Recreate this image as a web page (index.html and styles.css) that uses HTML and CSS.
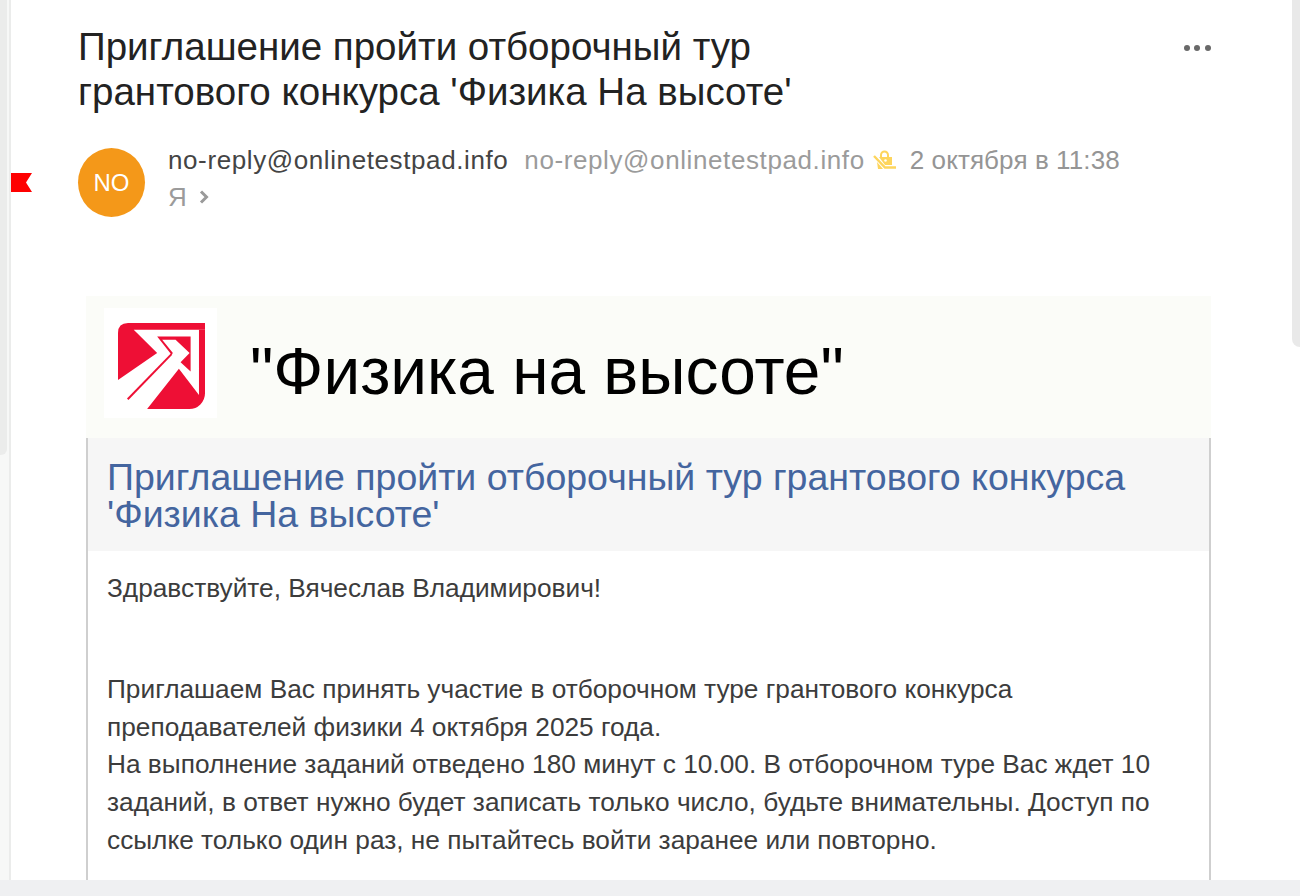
FILE: index.html
```html
<!DOCTYPE html>
<html lang="ru">
<head>
<meta charset="utf-8">
<title>Письмо</title>
<link rel="stylesheet" href="styles.css">
</head>
<body>
<div class="viewport">
  <div class="rail"><div class="rail-top"></div></div>
  <main class="mail">
    <header class="subject-row">
      <h1 class="subject">Приглашение пройти отборочный тур<br>грантового конкурса 'Физика На высоте'</h1>
      <div class="more"><i></i><i></i><i></i></div>
    </header>
    <section class="meta">
      <svg class="flag" viewBox="0 0 21 19" width="21" height="19"><path d="M0 0H21L15 9.500L21 19H0Z" fill="#fe0000"/></svg>
      <div class="avatar">NO</div>
      <div class="meta-text">
        <div class="from">
          <span class="from-name">no-reply@onlinetestpad.info</span>
          <span class="from-mail">no-reply@onlinetestpad.info</span>
          <svg class="lock" viewBox="872 154 23 20" width="23" height="20"><path d="M880 161V159a3.500 3.500 0 0 1 7 0V161" fill="none" stroke="#fdd55d" stroke-width="2"/><path d="M878 161H891V169H884Z" fill="#fdd55d"/><circle cx="884.500" cy="164.500" r="1.300" fill="#fff"/><path d="M873 160L884 171.500H895" fill="none" stroke="#fdd55d" stroke-width="2.400"/><path d="M876 166L882 173H877Z" fill="#fdd55d"/></svg>
          <span class="from-date">2 октября в 11:38</span>
        </div>
        <div class="to"><span>Я</span><svg viewBox="0 0 10 14" width="10" height="14"><path d="M2 1.500L7.500 7L2 12.500" fill="none" stroke="#9a9a9a" stroke-width="3"/></svg></div>
      </div>
    </section>
    <article class="letter">
      <div class="banner">
        <div class="logo-box">
          <svg viewBox="118 95 260 257" width="87" height="86">
            <path d="M118 125Q118 95 148 95H378V115H165L235 185L118 265Z" fill="#ee0f35"/>
            <path d="M360 115H378V305A47 47 0 0 1 331 352H205L300 232L360 310Z" fill="#ee0f35"/>
            <path d="M235 135H335V240L305 212L332 185L290 145H250L282 185L278 190Z" fill="#ee0f35"/>
            <path d="M147 323L278 188" stroke="#ee0f35" stroke-width="6" fill="none"/>
          </svg>
        </div>
        <div class="banner-title">"Физика на высоте"</div>
      </div>
      <div class="card">
        <h2 class="card-title">Приглашение пройти отборочный тур грантового конкурса 'Физика На высоте'</h2>
        <div class="card-body">
          <p class="greeting">Здравствуйте, Вячеслав Владимирович!</p>
          <p class="text">Приглашаем Вас принять участие в отборочном туре грантового конкурса<br>преподавателей физики 4 октября 2025 года.<br>На выполнение заданий отведено 180 минут с 10.00. В отборочном туре Вас ждет 10<br>заданий, в ответ нужно будет записать только число, будьте внимательны. Доступ по<br>ссылке только один раз, не пытайтесь войти заранее или повторно.</p>
        </div>
      </div>
    </article>
  </main>
  <div class="scroll"><div class="scroll-thumb"></div></div>
</div>
<div class="footer-band"></div>
</body>
</html>
```

FILE: styles.css
```css
* { box-sizing: border-box; }
html, body { margin: 0; height: 896px; overflow: hidden; background: #fff; }
body { font-family: "Liberation Sans", Arial, sans-serif; color: #2f2f2f; display: flex; flex-direction: column; }

.viewport { height: 880px; display: flex; overflow: hidden; background: #fff; }
.footer-band { height: 16px; background: #eff0f2; }

.rail { width: 11px; flex: none; background: #f7f8f7; border-right: 2px solid #ebeceb; }
.rail-top { height: 455px; width: 7px; background: #ebeceb; border-bottom-right-radius: 6px; }

.mail { flex: 1; min-width: 0; padding-top: 24px; }
.scroll { width: 8px; flex: none; }
.scroll-thumb { height: 347px; background: #e9e9e9; border-bottom-left-radius: 8px; }

.subject-row { display: flex; justify-content: space-between; padding: 0 81px 0 67px; }
.subject { margin: 0; font-size: 38.500px; line-height: 45px; font-weight: 400; color: #222; }
.more { display: flex; gap: 4.600px; padding-top: 21px; }
.more i { width: 6px; height: 6px; border-radius: 50%; background: #696969; }

.meta { position: relative; display: flex; gap: 23px; padding: 28px 0 0 67px; }
.flag { position: absolute; left: 0; top: 59px; }
.avatar { width: 67px; height: 69px; margin-top: 6px; border-radius: 50%; background: #f49819; color: #fff; font-size: 24px; display: flex; align-items: center; justify-content: center; }
.from { display: flex; align-items: center; height: 36px; font-size: 26px; white-space: nowrap; }
.from-name { color: #444; letter-spacing: 0.600px; }
.from-mail { color: #9b9b9b; letter-spacing: 0.600px; margin-left: 16px; }
.lock { margin-left: 8px; }
.from-date { color: #959595; letter-spacing: 0.100px; margin-left: 14px; }
.to { display: flex; align-items: center; gap: 12px; height: 34px; margin-top: 2px; font-size: 26px; color: #9b9b9b; }

.letter { margin: 79px 0 0 75px; width: 1125px; }
.banner { height: 142px; background: #fbfcf8; display: flex; align-items: center; padding: 0 0 0 18px; }
.logo-box { width: 113px; height: 110px; margin-top: -9px; background: #fff; display: flex; align-items: center; justify-content: center; }
.logo-box svg { margin: 6px 0 0 2px; }
.banner-title { font-size: 65.800px; color: #000; margin-left: 33px; padding-top: 7px; }

.card { border-left: 2px solid #cfcfcf; border-right: 2px solid #cfcfcf; }
.card-title { margin: 0; height: 113px; padding: 21px 60px 0 19px; background: #f6f6f6; font-size: 37.500px; line-height: 37px; font-weight: 400; color: #44659f; }
.card-body { padding: 18px 19px 60px; color: #3c3c3c; font-size: 26.250px; }
.greeting { margin: 0; line-height: 38px; }
.text { margin: 64px 0 0; line-height: 37.700px; white-space: nowrap; }
```
